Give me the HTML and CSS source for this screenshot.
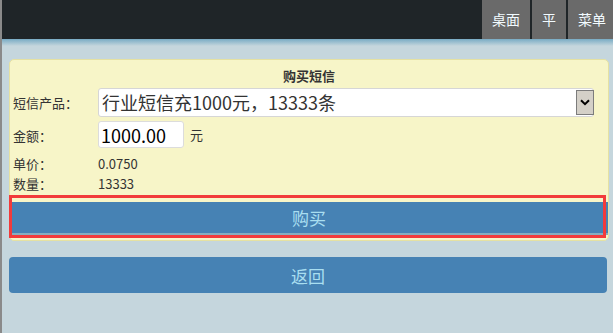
FILE: index.html
```html
<!DOCTYPE html>
<html lang="zh-CN">
<head>
    <meta charset="UTF-8">
    <meta name="viewport" content="width=device-width, initial-scale=1.0">
    <title>购买短信</title>
    <link rel="stylesheet" href="styles.css">
</head>
<body>
    <div class="topbar">
        <a class="top-btn">桌面</a>
        <a class="top-btn">平</a>
        <a class="top-btn last">菜单</a>
    </div>

    <div class="main">
        <div class="panel">
            <div class="panel-title">购买短信</div>

            <div class="form">
                <label class="label">短信产品：</label>
                <div class="select-box">
                    <select class="select">
                        <option>行业短信充1000元，13333条</option>
                    </select>
                    <span class="select-arrow">
                        <svg width="10" height="7" viewBox="0 0 10 7"><path d="M1 1.2 L5 5.2 L9 1.2" fill="none" stroke="#000" stroke-width="2"/></svg>
                    </span>
                </div>

                <label class="label">金额：</label>
                <div class="amount">
                    <input class="input" type="text" value="1000.00">
                    <span class="unit">元</span>
                </div>

                <span class="label">单价：</span>
                <span class="value">0.0750</span>

                <span class="label">数量：</span>
                <span class="value">13333</span>
            </div>

            <div class="buy-wrap">
                <button class="btn buy">购买</button>
                <div class="highlight"></div>
            </div>
        </div>

        <button class="btn back">返回</button>
    </div>
</body>
</html>
```

FILE: styles.css
```css
body {
    margin: 0;
    font-family: "Noto Sans CJK TC", "Noto Sans CJK SC", sans-serif;
    background: #c5d6dd;
    border-left: 2px solid #8a8a8a;
    height: 333px;
    overflow: hidden;
    color: #333;
    text-spacing-trim: space-all;
}

.topbar {
    height: 39px;
    background: #1f2528;
    display: flex;
    justify-content: flex-end;
    gap: 2px;
    overflow: hidden;
}

.top-btn {
    background: #6a6a6a;
    color: #f2fbff;
    font-size: 14px;
    line-height: 39px;
    padding: 0 10px;
    flex-shrink: 0;
}

.top-btn.last {
    padding-right: 7px;
}

.main {
    background: linear-gradient(#78abc4, #c5d6dd 7px);
    padding: 20px 4px 0 7px;
    height: 274px;
}

.panel {
    background: #f7f5c8;
    border: 1px solid #e5e1a2;
    border-radius: 5px;
    padding: 0 0 5px 0;
}

.panel-title {
    text-align: center;
    font-size: 13px;
    font-weight: bold;
    line-height: 18px;
    padding-top: 7px;
}

.form {
    display: grid;
    grid-template-columns: 85px 1fr;
    align-items: center;
    padding-left: 3px;
    margin-top: 3px;
}

.label {
    font-size: 13px;
    line-height: 20px;
}

.value {
    font-size: 13px;
    line-height: 20px;
}

.select-box {
    position: relative;
    height: 29px;
    margin-right: 14px;
}

.select {
    appearance: none;
    -webkit-appearance: none;
    width: 100%;
    height: 29px;
    box-sizing: border-box;
    border: 1px solid #d6d6d6;
    border-radius: 3px;
    background: #fff;
    font-family: inherit;
    font-size: 18px;
    color: #333;
    padding: 0 24px 0 3px;
    line-height: 27px;
}

.select-arrow {
    position: absolute;
    top: 2px;
    right: 0;
    width: 18px;
    height: 25px;
    box-sizing: border-box;
    background: #d4d0c8;
    border: 1px solid #7c7c7c;
    display: flex;
    align-items: center;
    justify-content: center;
}

.amount {
    display: flex;
    align-items: center;
    margin: 4px 0 6px;
}

.input {
    width: 86px;
    height: 27px;
    box-sizing: border-box;
    border: 1px solid #dcdcdc;
    border-radius: 3px;
    font-family: inherit;
    font-size: 18px;
    color: #000;
    padding: 0 2px;
}

.unit {
    font-size: 13px;
    margin-left: 6px;
}

.btn {
    display: block;
    width: 100%;
    border: none;
    background: #4682b4;
    color: #a9def0;
    font-family: inherit;
    font-size: 17px;
    cursor: pointer;
}

.buy-wrap {
    position: relative;
    margin-top: 8px;
}

.buy {
    height: 33px;
    border-bottom: 2px solid #86aebf;
    padding: 0;
}

.highlight {
    position: absolute;
    top: -7px;
    left: -1px;
    right: 2px;
    bottom: -3px;
    border: 3px solid #f23b3b;
}

.back {
    margin-top: 16px;
    height: 36px;
    width: calc(100% - 2px);
    border-radius: 4px;
}
```
